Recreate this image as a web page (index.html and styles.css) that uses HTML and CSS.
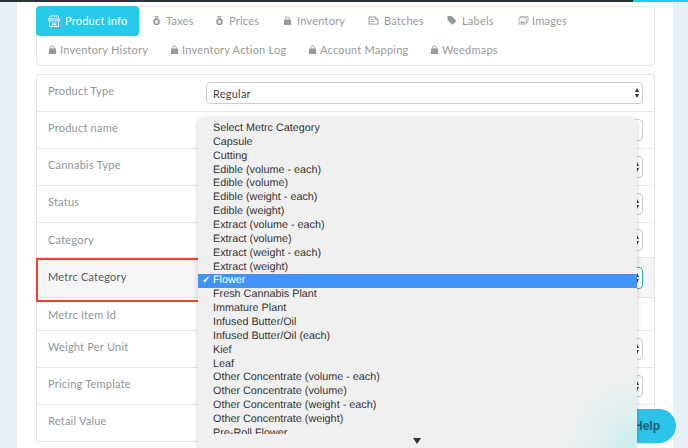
FILE: index.html
```html
<!DOCTYPE html>
<html lang="en">
<head>
<meta charset="utf-8">
<title>Product</title>
<link rel="stylesheet" href="styles.css">
</head>
<body>
<svg class="defs" width="0" height="0">
  <symbol id="i-lock" viewBox="0 0 10 10"><path d="M3 4.2V3a2 2 0 0 1 4 0v1.2" fill="none" stroke="currentColor" stroke-width="1"/><path d="M1.2 4h7.6l.4 6H.8z" fill="currentColor"/></symbol>
  <symbol id="i-weight" viewBox="0 0 10 10"><path d="M3.2 .6h3.6L6.2 3H3.8z" fill="none" stroke="currentColor" stroke-width="1"/><circle cx="5" cy="6.4" r="2.8" fill="none" stroke="currentColor" stroke-width="1.9"/></symbol>
  <symbol id="i-batch" viewBox="0 0 12 10"><path d="M1 1h7l3 3v5H1z" fill="none" stroke="currentColor" stroke-width="1.1"/><path d="M3 4h3M3 6h5M8 1v3h3" fill="none" stroke="currentColor"/></symbol>
  <symbol id="i-tag" viewBox="0 0 10 10"><path d="M0 0h4.5L10 5.5 5.5 10 0 4.5z" fill="currentColor"/></symbol>
  <symbol id="i-image" viewBox="0 0 11 10"><path d="M.5 2h8v7h-8z M2 2V.5h8.5V7H8.5" fill="none" stroke="currentColor" stroke-width=".8"/><path d="M1.5 8l2-2.5 1.5 1.5 1.5-1 1.2 2z" fill="currentColor"/></symbol>
  <symbol id="i-store" viewBox="0 0 12 12"><path d="M2 1h8l1.5 3.5a1.4 1.4 0 0 1-2.8.4 1.5 1.5 0 0 1-2.7 0 1.5 1.5 0 0 1-2.7 0 1.4 1.4 0 0 1-2.8-.4zM1.5 6v5.5h9V6M1 3.8h10M3.5 8h5M3.5 9.7h5" fill="none" stroke="currentColor" stroke-width=".9"/></symbol>
</svg>

<div class="topline"></div>
<main class="sheet">
  <nav class="tabs">
    <a class="tab active"><svg class="ic store"><use href="#i-store"/></svg>Product Info</a>
    <a class="tab t-taxes"><svg class="ic"><use href="#i-weight"/></svg>Taxes</a>
    <a class="tab t-prices"><svg class="ic"><use href="#i-weight"/></svg>Prices</a>
    <a class="tab t-inv"><svg class="ic"><use href="#i-lock"/></svg>Inventory</a>
    <a class="tab t-batch"><svg class="ic wide"><use href="#i-batch"/></svg>Batches</a>
    <a class="tab t-labels"><svg class="ic"><use href="#i-tag"/></svg>Labels</a>
    <a class="tab t-images"><svg class="ic wide"><use href="#i-image"/></svg>Images</a>
    <a class="tab second first"><svg class="ic"><use href="#i-lock"/></svg>Inventory History</a>
    <a class="tab second action"><svg class="ic"><use href="#i-lock"/></svg>Inventory Action Log</a>
    <a class="tab second mapping"><svg class="ic"><use href="#i-lock"/></svg>Account Mapping</a>
    <a class="tab second"><svg class="ic"><use href="#i-lock"/></svg>Weedmaps</a>
  </nav>

  <section class="form">
    <div class="row r37"><span class="label">Product Type</span><div class="select">Regular<span class="updown"></span></div></div>
    <div class="row r37"><span class="label">Product name</span><div class="select"></div></div>
    <div class="row r37"><span class="label">Cannabis Type</span><div class="select"><span class="updown"></span></div></div>
    <div class="row r37"><span class="label">Status</span><div class="select"><span class="updown"></span></div></div>
    <div class="row r35"><span class="label">Category</span><div class="select"><span class="updown"></span></div></div>
    <div class="row hl"><span class="label">Metrc Category</span><div class="select focus"><span class="updown"></span></div></div>
    <div class="row r33"><span class="label">Metrc Item Id</span></div>
    <div class="row r37"><span class="label">Weight Per Unit</span><div class="select"><span class="updown"></span></div></div>
    <div class="row r37"><span class="label">Pricing Template</span><div class="select"><span class="updown"></span></div></div>
    <div class="row r37"><span class="label">Retail Value</span></div>
  </section>
</main>

<a class="help">Help</a>

<ul class="menu">
  <li>Select Metrc Category</li>
  <li>Capsule</li>
  <li>Cutting</li>
  <li>Edible (volume - each)</li>
  <li>Edible (volume)</li>
  <li>Edible (weight - each)</li>
  <li>Edible (weight)</li>
  <li>Extract (volume - each)</li>
  <li>Extract (volume)</li>
  <li>Extract (weight - each)</li>
  <li>Extract (weight)</li>
  <li class="sel">Flower</li>
  <li>Fresh Cannabis Plant</li>
  <li>Immature Plant</li>
  <li>Infused Butter/Oil</li>
  <li>Infused Butter/Oil (each)</li>
  <li>Kief</li>
  <li>Leaf</li>
  <li>Other Concentrate (volume - each)</li>
  <li>Other Concentrate (volume)</li>
  <li>Other Concentrate (weight - each)</li>
  <li>Other Concentrate (weight)</li>
  <li class="clip">Pre-Roll Flower</li>
</ul>
<span class="more"></span>
</body>
</html>
```

FILE: styles.css
```css
* { box-sizing: border-box; }
html, body { margin: 0; height: 448px; overflow: hidden; }
body {
  background: #e8eff7;
  font-family: Lato, sans-serif;
  font-size: 11px;
  color: #9a9a9a;
  position: relative;
}
.defs { position: absolute; }
.topline {
  position: absolute; left: 0; top: 0; width: 100%; height: 2px;
  background: linear-gradient(to right, #2a3238 0, #2a3238 633px, #2bc9ea 633px);
}
.sheet {
  margin-left: 17px; width: 656px; height: 448px;
  background: #fff;
  padding: 6px 18px 0 19px;
}
.tabs {
  height: 60px;
  border: 1px solid #e6e6e6;
  border-radius: 4px;
  display: flex; flex-wrap: wrap; align-items: flex-start;
}
.tab {
  display: flex; align-items: center;
  height: 29px;
  padding-bottom: 2px;
  letter-spacing: .22px;
  white-space: nowrap;
}
.ic { width: 9px; height: 9px; margin-right: 5px; flex: none; }
.ic.wide { width: 11px; margin-right: 5px; }
.t-images .ic.wide { margin-right: 3px; }
.t-labels .ic { width: 10px; }
.tab.active {
  width: 103px; height: 30px; margin-left: -1px; margin-top: -1px;
  background: #25cbea; color: #fff;
  border-radius: 4px;
  padding: 0 0 1px 12px;
  margin-right: 13px;
}
.ic.store { width: 12px; height: 12px; margin-right: 5px; }
.t-taxes { width: 63px; }
.t-prices { width: 68px; }
.t-inv { width: 85px; }
.t-batch { width: 79px; }
.t-labels { width: 71px; }
.tab.second { height: 28px; width: 122px; }
.tab.second .ic { margin-right: 3px; }
.tab.first { margin-left: 11px; }
.tab.action { width: 138px; }
.form {
  margin-top: 8px;
  border: 1px solid #e6e6e6;
  border-bottom: 0;
  border-radius: 4px 4px 0 0;
}
.row {
  display: flex; align-items: center;
  border-bottom: 1px solid #e6e6e6;
  padding: 0 11px 0 11px;
  position: relative;
}
.r37 { height: 37px; }
.r35 { height: 35px; }
.r33 { height: 33px; }
.label { width: 158px; flex: none; letter-spacing: .22px; color: #8f969b; padding-bottom: 5px; }
.r35 .label { padding-bottom: 2px; }
.r33 .label { padding-bottom: 0; }
.select {
  flex: 1; height: 22px;
  border: 1px solid #cfcfcf; border-radius: 4px;
  display: flex; align-items: center;
  padding: 0 2px 0 6px;
  color: #444; letter-spacing: .22px;
  background: #fff;
}
.select.focus { border-color: #2bb59a; }
.updown { width: 5px; height: 10px; position: relative; margin-left: auto; }
.updown::before, .updown::after {
  content: ""; position: absolute; left: 0;
  border-left: 2.5px solid transparent; border-right: 2.5px solid transparent;
}
.updown::before { top: 0; border-bottom: 4px solid #333; }
.updown::after { bottom: 0; border-top: 4px solid #333; }
.hl {
  height: 40px;
  background: #f5f5f5;
  margin: 0 0 0 -1px;
  padding-left: 12px;
}
.hl .label { color: #5a5a5a; padding-bottom: 2px; }
.hl::before {
  content: ""; position: absolute; left: 0; top: 0; width: 160px; height: 40px;
  border: 2px solid #f6402c;
}
.help {
  position: absolute; left: 590px; top: 409px; width: 86px; height: 34px;
  border-radius: 17px;
  background: #2bc4e8;
  color: #1c5d73;
  font: bold 12px "Liberation Sans", sans-serif;
  display: flex; align-items: center; justify-content: flex-end;
  padding-right: 16px;
}
.menu {
  position: absolute; left: 198px; top: 118px; width: 439px; height: 330px;
  margin: 0; padding: 4px 0 0;
  list-style: none;
  border-radius: 5px;
  background: radial-gradient(circle at 100% 100%, #c6eeee 0, #e0f0f0 35px, #f0f0f0 75px);
  box-shadow: 0 1px 5px rgba(0,0,0,.2);
  font: 10.8px/13.87px "Liberation Sans", sans-serif;
  text-rendering: geometricPrecision;
  color: #333;
  overflow: hidden;
}
.menu li { height: 13.87px; padding-left: 15px; white-space: nowrap; }
.menu li.sel { background: #4193f7; color: #fff; position: relative; }
.menu li.sel::before { content: "\2713"; position: absolute; left: 4px; top: 0; font-size: 10px; font-weight: bold; }
.menu li.clip { height: 7px; overflow: hidden; }
.more {
  position: absolute; left: 413px; top: 438px;
  border-left: 4px solid transparent; border-right: 4px solid transparent;
  border-top: 6px solid #333;
}
```
